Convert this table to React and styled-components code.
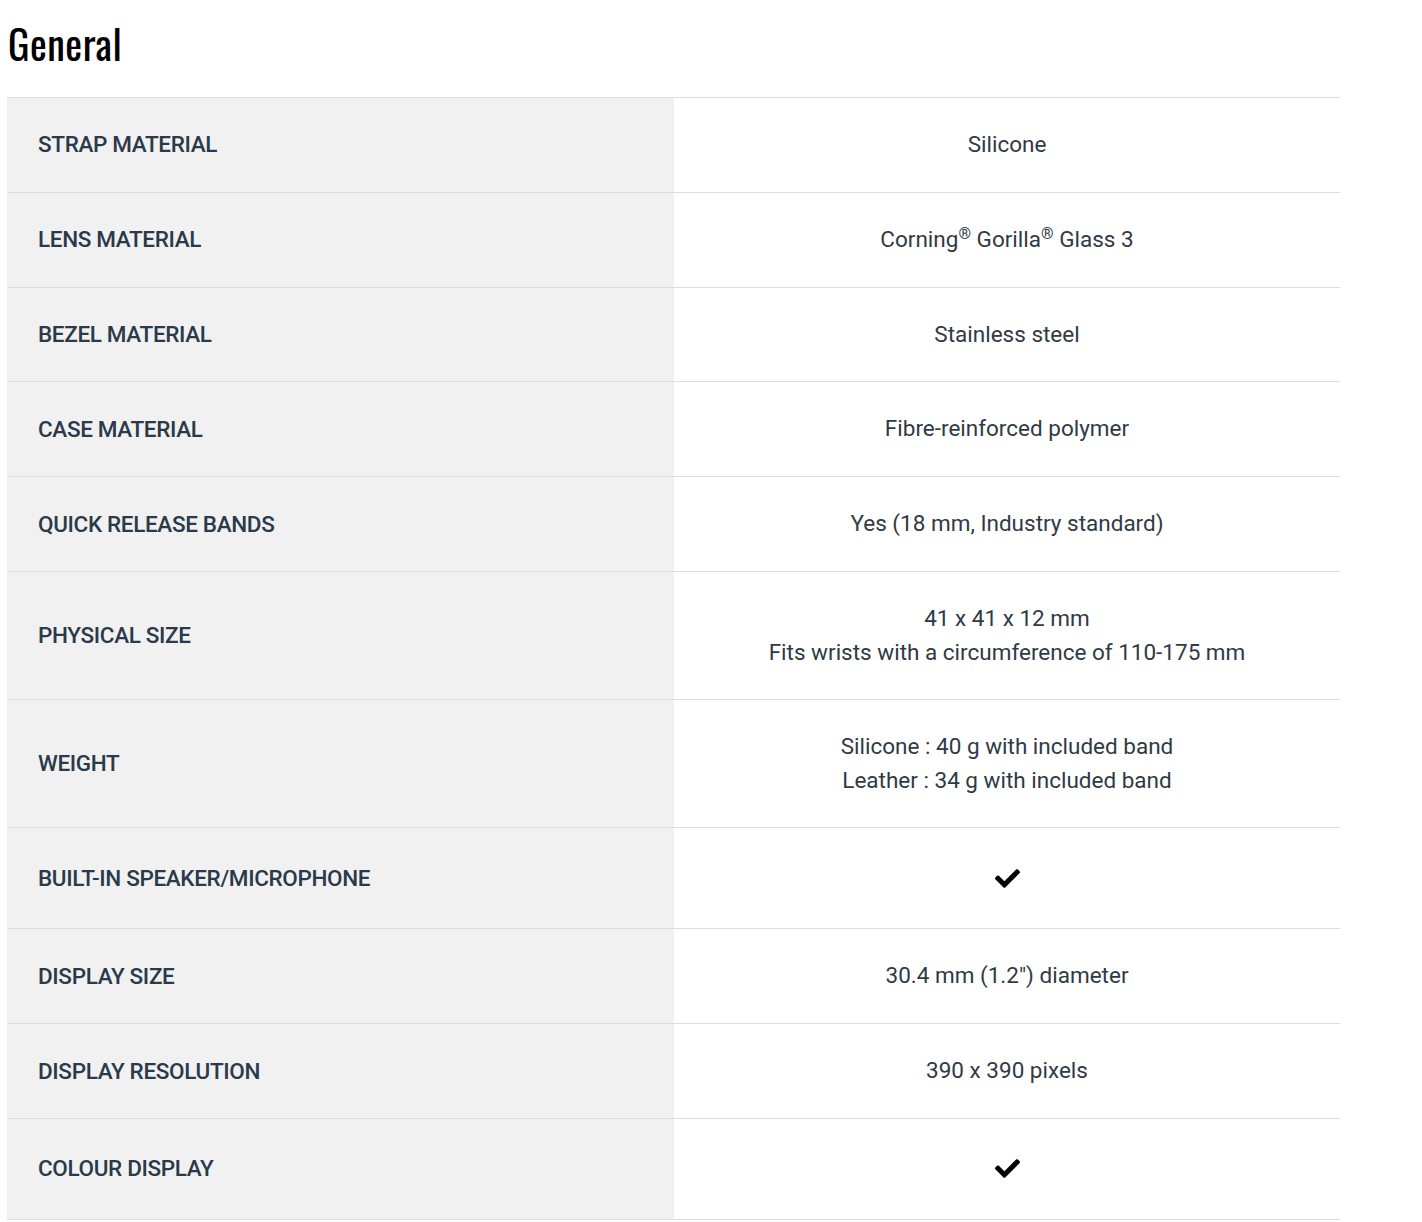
import React from 'react';
import styled, { createGlobalStyle } from 'styled-components';
import { FaCheck } from 'react-icons/fa';

const GlobalStyle = createGlobalStyle`
  body {
    margin: 0;
    background: #fff;
    font-family: Roboto, "Liberation Sans", sans-serif;
  }
`;

const Page = styled.div`
  padding: 0 82px 0 7px;
`;

const Heading = styled.h2`
  margin: 0;
  padding: 18px 0 0 1px;
  height: 97px;
  box-sizing: border-box;
  font-family: Oswald, "DejaVu Sans Condensed", "Liberation Sans Narrow", sans-serif;
  font-stretch: condensed;
  font-weight: 400;
  font-size: 40px;
  line-height: 50px;
  color: #000;
  letter-spacing: 0.5px;
`;

const Table = styled.div`
  border-top: 1px solid #ddd;
`;

const Row = styled.div`
  display: grid;
  grid-template-columns: 667px 1fr;
  border-bottom: 1px solid #ddd;
`;

const Label = styled.div`
  background: #f1f1f1;
  display: flex;
  align-items: center;
  padding: 0 31px 1px;
  font-weight: 500;
  font-size: 22.5px;
  color: #2b3a4a;
  letter-spacing: -0.35px;
`;

const Value = styled.div`
  display: flex;
  flex-direction: column;
  align-items: center;
  justify-content: center;
  text-align: center;
  padding: ${p => (p.$check ? '33.2px 0' : '30.15px 0')};
  min-height: 33.5px;
  font-size: 22.5px;
  line-height: 33.5px;
  color: #2f3a44;
`;

const Sup = styled.sup`
  font-size: 16px;
  line-height: 0;
  vertical-align: 8px;
`;

const Check = styled(FaCheck)`
  font-size: 25px;
  color: #000;
`;

const rows = [
  { label: 'STRAP MATERIAL', value: ['Silicone'] },
  {
    label: 'LENS MATERIAL',
    value: [
      <>Corning<Sup>®</Sup> Gorilla<Sup>®</Sup> Glass 3</>,
    ],
  },
  { label: 'BEZEL MATERIAL', value: ['Stainless steel'] },
  { label: 'CASE MATERIAL', value: ['Fibre-reinforced polymer'] },
  { label: 'QUICK RELEASE BANDS', value: ['Yes (18 mm, Industry standard)'] },
  {
    label: 'PHYSICAL SIZE',
    value: ['41 x 41 x 12 mm', 'Fits wrists with a circumference of 110-175 mm'],
  },
  {
    label: 'WEIGHT',
    value: ['Silicone : 40 g with included band', 'Leather : 34 g with included band'],
  },
  { label: 'BUILT-IN SPEAKER/MICROPHONE', check: true },
  { label: 'DISPLAY SIZE', value: ['30.4 mm (1.2") diameter'] },
  { label: 'DISPLAY RESOLUTION', value: ['390 x 390 pixels'] },
  { label: 'COLOUR DISPLAY', check: true },
];

export default function App() {
  return (
    <Page>
      <GlobalStyle />
      <Heading>General</Heading>
      <Table>
        {rows.map(r => (
          <Row key={r.label}>
            <Label>{r.label}</Label>
            <Value $check={r.check}>
              {r.check ? <Check /> : r.value.map((v, i) => <div key={i}>{v}</div>)}
            </Value>
          </Row>
        ))}
      </Table>
    </Page>
  );
}
